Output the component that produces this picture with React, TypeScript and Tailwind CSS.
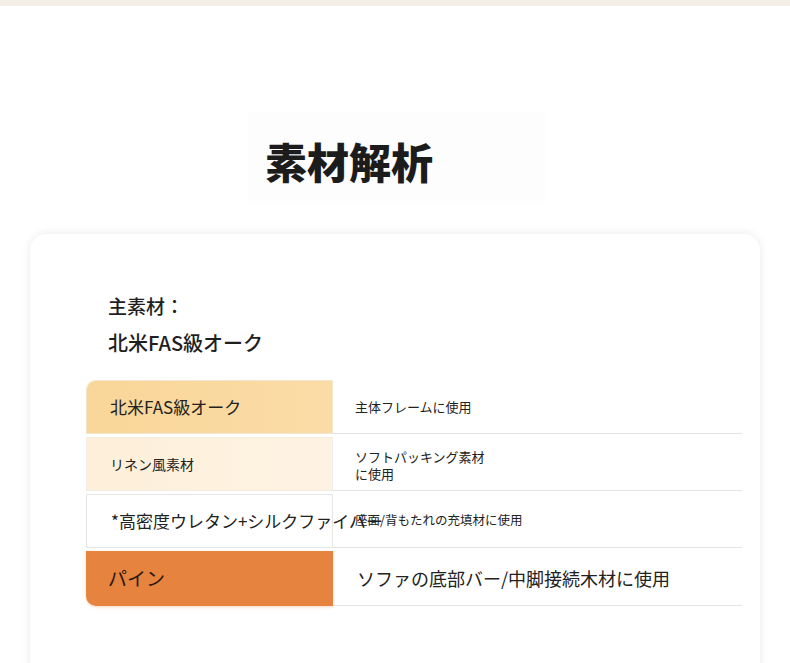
import React from "react";

const font = { fontFamily: '"Noto Sans CJK JP", "Noto Sans", sans-serif' };

export default function App() {
  return (
    <div className="w-[790px] h-[663px] overflow-hidden bg-white text-[#222]" style={font}>
      <div className="h-[6px] bg-[#f4eee7]" />
      <div className="ml-[248px] mt-[106px] w-[297px] h-[92px] bg-[#fdfdfd] flex items-center pl-[17px] pt-[6px]">
        <h1 className="text-[42px] leading-[60px] font-black text-[#1c1c1c]">素材解析</h1>
      </div>
      <div className="ml-[30px] mt-[30px] w-[730px] h-[500px] rounded-2xl bg-white shadow-[0_0_10px_rgba(0,0,0,0.09)] pt-[58px]">
        <div className="pl-[78px] text-[19px] leading-[27px] text-[#1f1f1f] font-medium">
          <div>主素材：</div>
          <div className="mt-[10px] text-[20px]">北米FAS級オーク</div>
        </div>
        <div className="ml-[56px] mt-[24px] w-[656px] flex flex-col gap-[3px]">
          <div className="flex h-[54px]">
            <div className="w-[247px] h-full rounded-tl-[10px] bg-gradient-to-r from-[#f9d699] to-[#fbdca6] border border-[#f3e6cf] flex items-center pl-[23px] text-[17px]">
              北米FAS級オーク
            </div>
            <div className="flex-1 border-b border-[#e4e4e4] flex items-center pl-[22px] text-[13px]">
              主体フレームに使用
            </div>
          </div>
          <div className="flex h-[54px]">
            <div className="w-[247px] h-full bg-gradient-to-r from-[#fdefd9] to-[#fef3e3] border border-[#f3ece2] flex items-center pl-[23px] text-[14px]">
              リネン風素材
            </div>
            <div className="flex-1 border-b border-[#e4e4e4] flex items-center pl-[22px] pt-[2px]">
              <p className="text-[13px] leading-[17px]">
                ソフトパッキング素材
                <br />
                に使用
              </p>
            </div>
          </div>
          <div className="flex h-[54px]">
            <div className="w-[247px] h-full bg-white border border-[#e6e6e6] flex items-center pl-[24px] text-[17px] whitespace-nowrap overflow-visible relative z-0">
              *高密度ウレタン+シルクファイバー
            </div>
            <div className="flex-1 border-b border-[#e4e4e4] flex items-center pl-[22px] text-[12.5px] relative z-10">
              座面/背もたれの充填材に使用
            </div>
          </div>
          <div className="flex h-[55px]">
            <div className="w-[247px] h-full rounded-bl-[10px] bg-[#e6833f] shadow-[0_1px_3px_rgba(230,131,63,0.35)] flex items-center pl-[22px] text-[19px] text-[#2a170c]">
              パイン
            </div>
            <div className="flex-1 border-b border-[#e4e4e4] flex items-center pl-[24px] text-[18px]">
              ソファの底部バー/中脚接続木材に使用
            </div>
          </div>
        </div>
      </div>
    </div>
  );
}
